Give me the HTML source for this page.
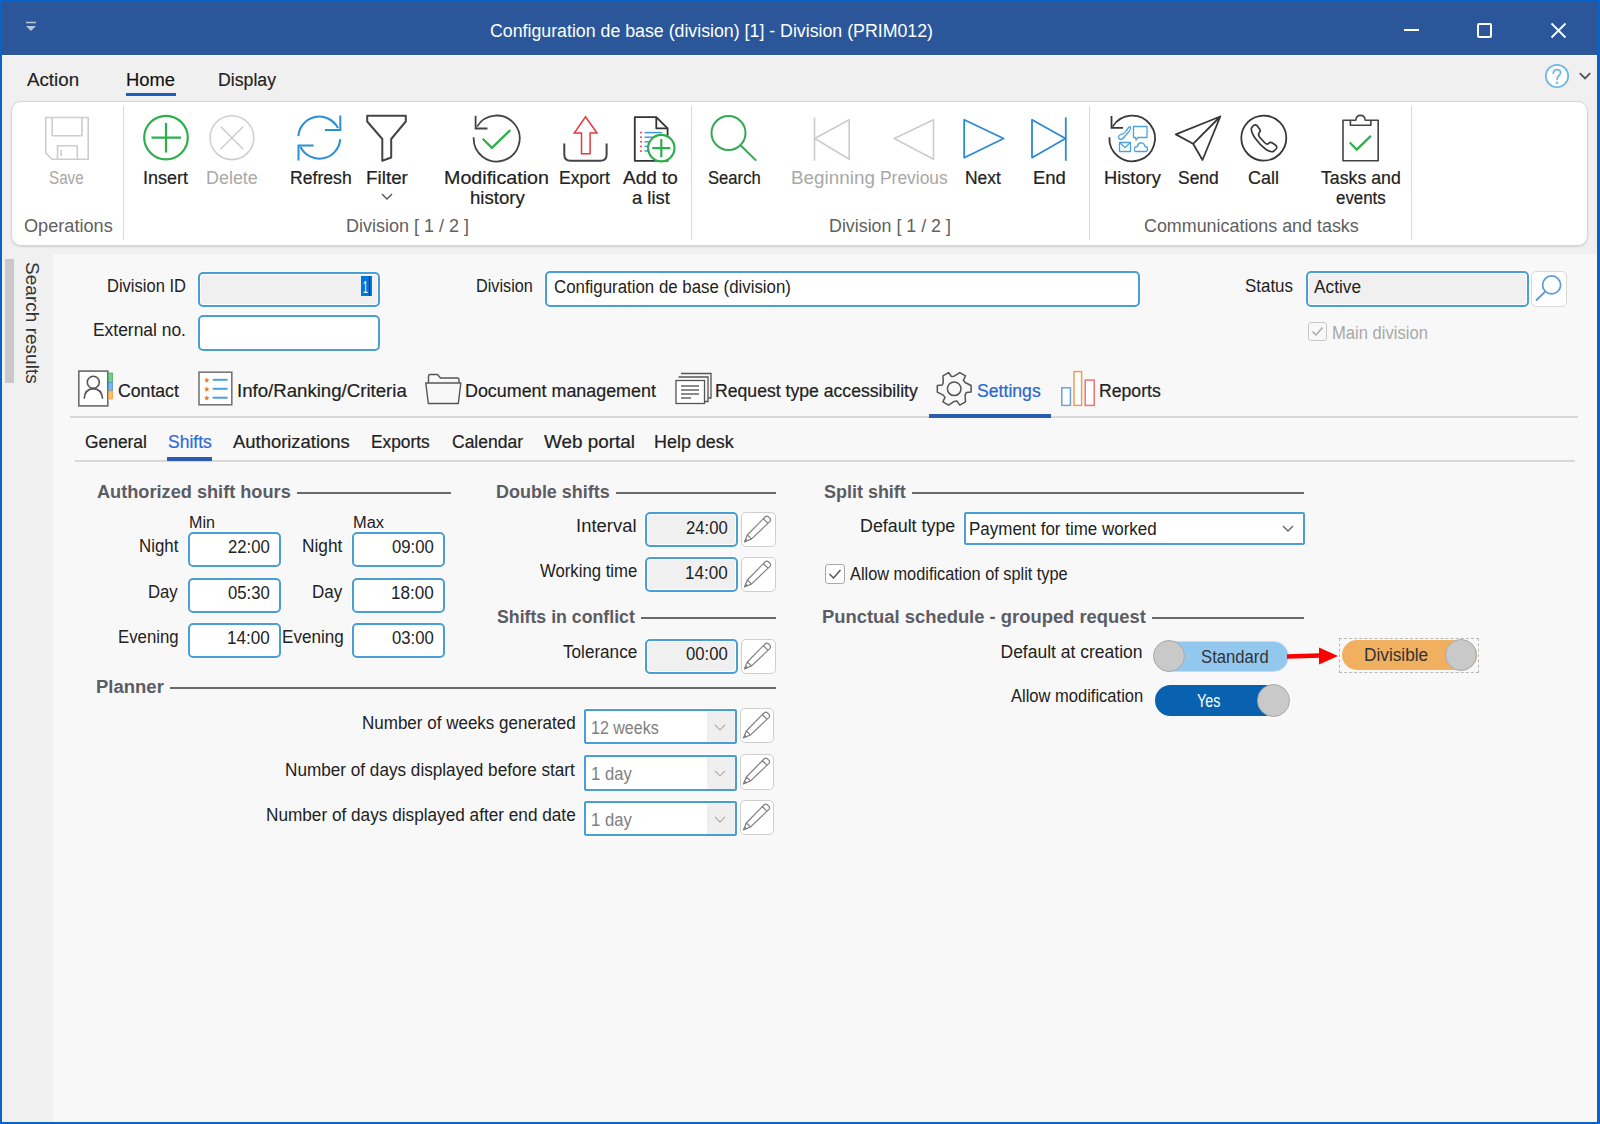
<!DOCTYPE html>
<html><head><meta charset="utf-8"><style>
html,body{margin:0;padding:0;width:1600px;height:1124px;overflow:hidden;background:#f8f8f8;}
body{position:relative;font-family:"Liberation Sans",sans-serif;}
.t{position:absolute;white-space:nowrap;line-height:1;transform-origin:0 0;}
.a{position:absolute;box-sizing:border-box;}
svg{position:absolute;overflow:visible;}
</style></head><body>
<div class=a style="left:0;top:0;width:1600px;height:55px;background:#2b579a"></div>
<div class=a style="left:0;top:55px;width:1600px;height:199px;background:#f0f0f0"></div>
<div class=a style="left:0;top:55px;width:1600px;height:1px;background:#fafafa"></div>
<div class=a style="left:0;top:254px;width:53px;height:870px;background:#f0f0f0"></div>
<div class=a style="left:5px;top:259px;width:9px;height:124px;background:#c9c9c9"></div>
<div class=a style="left:0;top:0;width:2px;height:1124px;background:#0a62c8"></div>
<div class=a style="left:1597px;top:0;width:3px;height:1124px;background:#0a62c8"></div>
<div class=a style="left:0;top:1122px;width:1600px;height:2px;background:#0a62c8"></div>
<div class=a style="left:0;top:0;width:1600px;height:1px;background:#0a62c8"></div>
<div class=a style="left:1404px;top:29px;width:15px;height:2px;background:#fff"></div>
<div class=a style="left:1477px;top:23px;width:15px;height:15px;border:2px solid #fff;border-radius:2px"></div>
<svg style="left:1551px;top:23px" width="15" height="15"><path d="M0.5 0.5L14.5 14.5M14.5 0.5L0.5 14.5" stroke="#fff" stroke-width="1.8"/></svg>
<svg style="left:25px;top:21px" width="12" height="12"><path d="M1 1.5H11" stroke="#b8c4d8" stroke-width="1.5"/><path d="M1 5L6 10L11 5Z" fill="#b8c4d8"/></svg>
<div class=a style="left:126px;top:93px;width:50px;height:3px;background:#1a5fc0"></div>
<svg style="left:1544px;top:62.5px" width="26" height="26"><circle cx="13" cy="13" r="11.2" fill="#fff" stroke="#72b8e6" stroke-width="1.8"/><path d="M9.3 10.3C9.3 7.9 11 6.6 13.1 6.6C15.3 6.6 16.6 8.1 16.6 9.8C16.6 12.2 13.1 13 13.1 16.3" fill="none" stroke="#72b8e6" stroke-width="1.8" stroke-linecap="round"/><circle cx="13" cy="19.8" r="1.2" fill="#72b8e6"/></svg>
<svg style="left:1579px;top:72px" width="12" height="8"><path d="M0.8 1.2L6 6.4L11.2 1.2" fill="none" stroke="#555" stroke-width="1.9"/></svg>
<div class=a style="left:11px;top:101px;width:1577px;height:145px;background:#fff;border:1px solid #d6d6d6;border-radius:10px;box-shadow:0 1px 2px rgba(0,0,0,0.12)"></div>
<div class=a style="left:123px;top:106px;width:1px;height:134px;background:#d9d9d9"></div>
<div class=a style="left:691px;top:106px;width:1px;height:134px;background:#d9d9d9"></div>
<div class=a style="left:1089px;top:106px;width:1px;height:134px;background:#d9d9d9"></div>
<div class=a style="left:1411px;top:106px;width:1px;height:134px;background:#d9d9d9"></div>
<svg style="left:381px;top:193px" width="12" height="8"><path d="M1 1L6 6L11 1" fill="none" stroke="#555" stroke-width="1.4"/></svg>
<svg style="left:40px;top:110px" width="55" height="55" viewBox="40 110 55 55"><g fill="none" stroke="#cdcdcd" stroke-width="1.6" stroke-linejoin="round"><path d="M45.8 117.5H88.2V159.3H52L45.8 153Z"/><path d="M52.2 117.5V135.8H82V117.5"/><path d="M57.5 159.3V145.7H77.3V159.3"/><path d="M61.2 150V156"/></g></svg>
<svg style="left:138px;top:110px" width="56" height="56" viewBox="138 110 56 56"><g fill="none" stroke="#2db04b" stroke-width="2.2"><circle cx="166" cy="137.6" r="21.8"/><path d="M151.5 137.6H181M166 123V152.5"/></g></svg>
<svg style="left:205px;top:110px" width="56" height="56" viewBox="205 110 56 56"><g fill="none" stroke="#cfcfcf" stroke-width="1.6"><circle cx="231.9" cy="137.7" r="21.9"/><path d="M220.5 126.5L243.3 149.2M243.3 126.5L220.5 149.2"/></g></svg>
<svg style="left:292px;top:110px" width="56" height="56" viewBox="292 110 56 56"><g fill="none" stroke="#2b8fd8" stroke-width="2"><path d="M298.35 136.1A21 21 0 0 1 338 128.1"/><path d="M340.3 115.5V130H325"/><path d="M340.25 139.1A21 21 0 0 1 300.4 146.8"/><path d="M298.5 160.5V145.5H313.6"/></g></svg>
<svg style="left:360px;top:110px" width="52" height="56" viewBox="360 110 52 56"><path d="M367.2 115.8H405.8V121.5L391.2 139V157.5L382.3 160.8V139L367.2 121.5Z" fill="none" stroke="#444" stroke-width="2" stroke-linejoin="round"/></svg>
<svg style="left:466px;top:108px" width="60" height="60" viewBox="466 108 60 60"><g fill="none" stroke="#444" stroke-width="1.8"><path d="M477 126.6A23 23 0 1 1 473.7 137.3"/><path d="M475.6 115.8V128.5H487.5"/></g><path d="M482.7 138.8L491.9 147.8L510.3 130.2" fill="none" stroke="#2db04b" stroke-width="2.3"/></svg>
<svg style="left:560px;top:110px" width="52" height="56" viewBox="560 110 52 56"><path d="M585.5 116.8L597 133H590.1V153.8H581.5V133H574.3Z" fill="none" stroke="#e8383d" stroke-width="1.5" stroke-linejoin="miter"/><path d="M564.3 143.5V154.5Q564.3 160.8 570.6 160.8H600.3Q606.6 160.8 606.6 154.5V143.5" fill="none" stroke="#444" stroke-width="2"/></svg>
<svg style="left:628px;top:110px" width="50" height="56" viewBox="628 110 50 56"><g fill="none" stroke="#333" stroke-width="1.8" stroke-linejoin="round"><path d="M634.8 117.2H656.3L667.6 128.3V160.8H634.8Z"/><path d="M656.3 117.5V128.3H667.4"/></g><circle cx="641" cy="132.6" r="1" fill="#e8443a"/><path d="M644.5 132.6H662" stroke="#3a93dc" stroke-width="1.4"/><circle cx="641" cy="137.2" r="1" fill="#e8443a"/><path d="M644.5 137.2H662" stroke="#3a93dc" stroke-width="1.4"/><circle cx="641" cy="141.8" r="1" fill="#e8443a"/><path d="M644.5 141.8H662" stroke="#3a93dc" stroke-width="1.4"/><circle cx="641" cy="146.4" r="1" fill="#e8443a"/><path d="M644.5 146.4H662" stroke="#3a93dc" stroke-width="1.4"/><circle cx="641" cy="151" r="1" fill="#e8443a"/><path d="M644.5 151H662" stroke="#3a93dc" stroke-width="1.4"/><circle cx="661.3" cy="148.1" r="13.2" fill="#fff" stroke="#2db04b" stroke-width="2.2"/><path d="M652.3 148.1H670.3M661.3 139.1V157.1" stroke="#2db04b" stroke-width="2.2"/></svg>
<svg style="left:705px;top:110px" width="56" height="56" viewBox="705 110 56 56"><g fill="none" stroke="#33a956" stroke-width="2"><circle cx="728.5" cy="133" r="17"/><path d="M740.8 145.5L756.2 160.6"/></g></svg>
<svg style="left:805px;top:110px" width="50" height="56" viewBox="805 110 50 56"><g fill="none" stroke="#cccccc" stroke-width="1.6" stroke-linejoin="round"><path d="M814.5 117.4V160.8"/><path d="M849.2 119.8V159.2L814.8 138.5Z"/></g></svg>
<svg style="left:888px;top:110px" width="50" height="56" viewBox="888 110 50 56"><path d="M933.5 119.8V159.2L894.3 138.5Z" fill="none" stroke="#cccccc" stroke-width="1.6" stroke-linejoin="round"/></svg>
<svg style="left:958px;top:110px" width="50" height="56" viewBox="958 110 50 56"><path d="M964.2 119.8V157.7L1003.6 138.5Z" fill="none" stroke="#2b8ad8" stroke-width="1.8" stroke-linejoin="round"/></svg>
<svg style="left:1026px;top:110px" width="48" height="56" viewBox="1026 110 48 56"><g fill="none" stroke="#2b8ad8" stroke-width="1.8" stroke-linejoin="round"><path d="M1032 119.8V157.7L1065.5 138.5Z"/><path d="M1065.8 117.4V160.8"/></g></svg>
<svg style="left:1104px;top:110px" width="58" height="56" viewBox="1104 110 58 56"><g fill="none" stroke="#383838" stroke-width="1.8"><path d="M1112.7 126.6A22.8 22.8 0 1 1 1109.4 137.3"/><path d="M1111.5 116V127.8H1123"/></g><g fill="none" stroke="#4ba2e0" stroke-width="1.3" stroke-linejoin="round"><path d="M1133.5 126.5H1147V137.5H1138L1136 140L1135.5 137.5H1133.5Z"/><rect x="1119.5" y="142.5" width="11" height="9"/><path d="M1119.5 142.5L1125 147.5L1130.5 142.5"/><path d="M1135 151.5H1146Q1147.5 151.5 1147.5 149Q1147.5 146.5 1145 146.5Q1144 142.5 1140.5 143Q1137.5 143.5 1137.5 146.5Q1134 146.5 1134.5 149.5Q1134.8 151.5 1135 151.5Z"/><path d="M1119 138.5Q1117.5 135.5 1121 134.5Q1124 134 1126 131L1129 127Q1130 126 1130.5 127.5Q1131 129 1129 131.5L1125 136Q1122.5 139.5 1120.5 139.5Q1119.3 139.5 1119 138.5Z"/></g></svg>
<svg style="left:1170px;top:110px" width="56" height="56" viewBox="1170 110 56 56"><path d="M1220.3 116.5L1175.8 134.4L1193.1 143.8Z M1220.3 116.5L1193.1 143.8L1202.5 160Z" fill="none" stroke="#383838" stroke-width="1.8" stroke-linejoin="round"/></svg>
<svg style="left:1236px;top:110px" width="56" height="56" viewBox="1236 110 56 56"><circle cx="1263.8" cy="138.1" r="22.5" fill="none" stroke="#383838" stroke-width="1.8"/><path d="M1253 126Q1255 124 1257 125.5L1259.5 129Q1261 131 1259 133Q1258 134.5 1259.5 137L1264.5 142.5Q1267 145 1268.5 143.5Q1270.5 141.5 1272.5 143L1276 145.5Q1277.5 147 1276 149L1274 151Q1271.5 153 1266 149.5Q1260 145 1255 138Q1250.5 131 1251.5 128Z" fill="none" stroke="#383838" stroke-width="1.7" stroke-linejoin="round"/></svg>
<svg style="left:1336px;top:110px" width="50" height="56" viewBox="1336 110 50 56"><g fill="none" stroke="#444" stroke-width="1.6" stroke-linejoin="round"><path d="M1343 120.3H1355.8Q1356.2 115.4 1360.5 115.4Q1364.8 115.4 1365.2 120.3H1378.2V160.8H1343Z"/><path d="M1350.4 120.3V125.3H1370.9V120.3"/></g><path d="M1349.8 142.6L1356.7 149.6L1370.9 135.9" fill="none" stroke="#2db04b" stroke-width="2.2"/></svg>
<svg style="left:74px;top:366px" width="44" height="46" viewBox="74 366 44 46"><rect x="78.8" y="371.1" width="29" height="34.8" fill="#fff" stroke="#6a6a6a" stroke-width="1.6"/><circle cx="93.3" cy="382.3" r="6" fill="none" stroke="#555" stroke-width="1.6"/><path d="M84.2 398.6Q85 388.8 93.3 388.6Q101.6 388.8 102.6 398.6" fill="none" stroke="#555" stroke-width="1.6"/><rect x="108.5" y="373" width="4" height="9.5" fill="#7fc88f" stroke="#4cae60" stroke-width="0.8"/><rect x="108.5" y="382.5" width="4" height="8.5" fill="#7fb5e4" stroke="#4a94d8" stroke-width="0.8"/><rect x="108.5" y="391" width="4" height="8" fill="#f3c078" stroke="#eaa040" stroke-width="0.8"/></svg>
<svg style="left:194px;top:366px" width="42" height="46" viewBox="194 366 42 46"><rect x="199" y="372.2" width="32.8" height="32.6" fill="#fff" stroke="#777" stroke-width="1.6"/><path d="M206.8 377.2L207.6 379.2L209.6 379.40000000000003L208 380.7L208.6 382.7L206.8 381.5L205 382.7L205.6 380.7L204 379.40000000000003L206 379.2Z" fill="#ee7a2a"/><path d="M212.7 379.8H227.6" stroke="#4aa0dc" stroke-width="2"/><path d="M206.8 386.2L207.6 388.2L209.6 388.40000000000003L208 389.7L208.6 391.7L206.8 390.5L205 391.7L205.6 389.7L204 388.40000000000003L206 388.2Z" fill="#ee7a2a"/><path d="M212.7 388.8H227.6" stroke="#4aa0dc" stroke-width="2"/><path d="M206.8 395.09999999999997L207.6 397.09999999999997L209.6 397.3L208 398.59999999999997L208.6 400.59999999999997L206.8 399.4L205 400.59999999999997L205.6 398.59999999999997L204 397.3L206 397.09999999999997Z" fill="#ee7a2a"/><path d="M212.7 397.7H227.6" stroke="#4aa0dc" stroke-width="2"/></svg>
<svg style="left:420px;top:366px" width="46" height="46" viewBox="420 366 46 46"><g fill="none" stroke="#555" stroke-width="1.4" stroke-linejoin="round"><path d="M428.5 382.5V376Q428.5 374.5 430 374.5H437.5L440.5 378H457.5Q459 378 459 379.5V382.5"/><path d="M425.8 383H460.8L458.3 403.5H428.3Z"/></g></svg>
<svg style="left:670px;top:366px" width="46" height="46" viewBox="670 366 46 46"><g fill="none" stroke="#555" stroke-width="1.3"><path d="M681 373.5H711V398H708"/><path d="M678.5 377H708V401.5H705"/><rect x="676" y="380.5" width="28.5" height="23" fill="#fff"/></g><path d="M681 386H699M681 390H699M681 394H699M681 398H691" stroke="#666" stroke-width="1.3"/></svg>
<svg style="left:930px;top:366px" width="48" height="46" viewBox="930 366 48 46"><path d="M965.11 382.50 L971.08 385.52 L971.08 392.08 L966.25 392.48 L965.11 395.10 L965.48 401.78 L959.80 405.06 L957.03 401.08 L954.20 401.40 L948.60 405.06 L942.92 401.78 L944.98 397.39 L943.29 395.10 L937.32 392.08 L937.32 385.52 L942.15 385.12 L943.29 382.50 L942.92 375.82 L948.60 372.54 L951.37 376.52 L954.20 376.20 L959.80 372.54 L965.48 375.82 L963.42 380.21Z" fill="none" stroke="#555" stroke-width="1.5" stroke-linejoin="round"/><circle cx="954.2" cy="388.8" r="6.8" fill="none" stroke="#555" stroke-width="1.5"/></svg>
<svg style="left:1056px;top:366px" width="44" height="46" viewBox="1056 366 44 46"><rect x="1061.8" y="387.8" width="8.6" height="17.6" fill="#fff" stroke="#6aa2da" stroke-width="1.5"/><rect x="1074" y="371.6" width="7.6" height="33.8" fill="#fff" stroke="#ef9d55" stroke-width="1.5"/><rect x="1085.2" y="380.1" width="9" height="25.3" fill="#fff" stroke="#ea7474" stroke-width="1.5"/></svg>
<div class=a style="left:198px;top:272px;width:182px;height:35px;background:#f0f0f0;border:2px solid #4a9ed6;border-radius:5px;box-shadow:0 0 0 1px #fff,inset 0 0 0 1px #fff"></div>
<div class=a style="left:361px;top:276px;width:11px;height:20px;background:#0078d7"></div>
<div class=a style="left:369px;top:276px;width:1px;height:20px;background:#222"></div>
<div class=a style="left:198px;top:315px;width:182px;height:36px;background:#fff;border:2px solid #4a9ed6;border-radius:5px;box-shadow:0 0 0 1px #fff,inset 0 0 0 1px #fff"></div>
<div class=a style="left:545px;top:271px;width:595px;height:36px;background:#fff;border:2px solid #4a9ed6;border-radius:5px;box-shadow:0 0 0 1px #fff,inset 0 0 0 1px #fff"></div>
<div class=a style="left:1306px;top:271px;width:223px;height:36px;background:#f0f0f0;border:2px solid #4a9ed6;border-radius:5px;box-shadow:0 0 0 1px #fff,inset 0 0 0 1px #fff"></div>
<div class=a style="left:1531px;top:271px;width:36px;height:36px;background:#fff;border:1px solid #d9d9d9;border-radius:5px"></div>
<svg style="left:1535px;top:274px" width="30" height="30"><circle cx="16.6" cy="10.9" r="9" fill="none" stroke="#5a9ad8" stroke-width="1.7"/><path d="M10.2 17.6L1.5 26" stroke="#5a9ad8" stroke-width="1.9" stroke-linecap="round"/></svg>
<div class=a style="left:1308px;top:322px;width:19px;height:19px;border:1px solid #c8c8c8;border-radius:3px;background:#f8f8f8"></div>
<svg style="left:1308px;top:322px" width="19" height="19"><path d="M4.5 9.5L8 13L14.5 5.5" fill="none" stroke="#aaa" stroke-width="1.5"/></svg>
<div class=a style="left:70px;top:416px;width:1508px;height:2px;background:#d8d8d8"></div>
<div class=a style="left:929px;top:414px;width:122px;height:4px;background:#2b5cb0"></div>
<div class=a style="left:75px;top:460px;width:1500px;height:2px;background:#d8d8d8"></div>
<div class=a style="left:167px;top:457px;width:45px;height:4px;background:#2b5cb0"></div>
<div class=a style="left:297px;top:492px;width:154px;height:2px;background:#6a6a6a"></div>
<div class=a style="left:616px;top:492px;width:160px;height:2px;background:#6a6a6a"></div>
<div class=a style="left:641px;top:617px;width:135px;height:2px;background:#6a6a6a"></div>
<div class=a style="left:170px;top:687px;width:606px;height:2px;background:#6a6a6a"></div>
<div class=a style="left:912px;top:492px;width:392px;height:2px;background:#6a6a6a"></div>
<div class=a style="left:1152px;top:617px;width:152px;height:2px;background:#6a6a6a"></div>
<div class=a style="left:188px;top:532px;width:93px;height:35px;background:#fff;border:2px solid #4a9ed6;border-radius:5px;box-shadow:0 0 0 1px #fff,inset 0 0 0 1px #fff"></div>
<div class=a style="left:352px;top:532px;width:93px;height:35px;background:#fff;border:2px solid #4a9ed6;border-radius:5px;box-shadow:0 0 0 1px #fff,inset 0 0 0 1px #fff"></div>
<div class=a style="left:188px;top:578px;width:93px;height:35px;background:#fff;border:2px solid #4a9ed6;border-radius:5px;box-shadow:0 0 0 1px #fff,inset 0 0 0 1px #fff"></div>
<div class=a style="left:352px;top:578px;width:93px;height:35px;background:#fff;border:2px solid #4a9ed6;border-radius:5px;box-shadow:0 0 0 1px #fff,inset 0 0 0 1px #fff"></div>
<div class=a style="left:188px;top:623px;width:93px;height:35px;background:#fff;border:2px solid #4a9ed6;border-radius:5px;box-shadow:0 0 0 1px #fff,inset 0 0 0 1px #fff"></div>
<div class=a style="left:352px;top:623px;width:93px;height:35px;background:#fff;border:2px solid #4a9ed6;border-radius:5px;box-shadow:0 0 0 1px #fff,inset 0 0 0 1px #fff"></div>
<div class=a style="left:645px;top:512px;width:93px;height:35px;background:#f0f0f0;border:2px solid #4a9ed6;border-radius:5px;box-shadow:0 0 0 1px #fff,inset 0 0 0 1px #fff"></div>
<div class=a style="left:741px;top:512px;width:35px;height:35px;background:#fff;border:1px solid #cfcfcf;border-radius:5px"></div>
<svg style="left:741px;top:512px" width="35" height="35"><path d="M3.4 30L6.3 23L24 5Q25.8 3.3 27.6 5L28.8 6.2Q30.4 8 28.7 9.6L10.6 26.9Z M6.3 23L10.6 26.9 M22.4 6.8L26.9 11.1" fill="none" stroke="#808080" stroke-width="1.2" stroke-linejoin="round"/><path d="M3.4 30L4.6 26.2L7.2 28.7Z" fill="#808080"/></svg>
<div class=a style="left:645px;top:557px;width:93px;height:35px;background:#f0f0f0;border:2px solid #4a9ed6;border-radius:5px;box-shadow:0 0 0 1px #fff,inset 0 0 0 1px #fff"></div>
<div class=a style="left:741px;top:557px;width:35px;height:35px;background:#fff;border:1px solid #cfcfcf;border-radius:5px"></div>
<svg style="left:741px;top:557px" width="35" height="35"><path d="M3.4 30L6.3 23L24 5Q25.8 3.3 27.6 5L28.8 6.2Q30.4 8 28.7 9.6L10.6 26.9Z M6.3 23L10.6 26.9 M22.4 6.8L26.9 11.1" fill="none" stroke="#808080" stroke-width="1.2" stroke-linejoin="round"/><path d="M3.4 30L4.6 26.2L7.2 28.7Z" fill="#808080"/></svg>
<div class=a style="left:645px;top:639px;width:93px;height:35px;background:#f0f0f0;border:2px solid #4a9ed6;border-radius:5px;box-shadow:0 0 0 1px #fff,inset 0 0 0 1px #fff"></div>
<div class=a style="left:741px;top:639px;width:35px;height:35px;background:#fff;border:1px solid #cfcfcf;border-radius:5px"></div>
<svg style="left:741px;top:639px" width="35" height="35"><path d="M3.4 30L6.3 23L24 5Q25.8 3.3 27.6 5L28.8 6.2Q30.4 8 28.7 9.6L10.6 26.9Z M6.3 23L10.6 26.9 M22.4 6.8L26.9 11.1" fill="none" stroke="#808080" stroke-width="1.2" stroke-linejoin="round"/><path d="M3.4 30L4.6 26.2L7.2 28.7Z" fill="#808080"/></svg>
<div class=a style="left:584px;top:709px;width:153px;height:35px;background:#fff;border:2px solid #4a9ed6;border-radius:2px;box-shadow:0 0 0 1px #fff,inset 0 0 0 1px #fff"></div>
<div class=a style="left:707px;top:711px;width:28px;height:31px;background:#efefef"></div>
<svg style="left:714px;top:723.5px" width="12" height="7"><path d="M1 1L6 6L11 1" fill="none" stroke="#b0b0b0" stroke-width="1.2"/></svg>
<div class=a style="left:740px;top:708px;width:34px;height:35px;background:#fff;border:1px solid #cfcfcf;border-radius:5px"></div>
<svg style="left:740px;top:708px" width="35" height="35"><path d="M3.4 30L6.3 23L24 5Q25.8 3.3 27.6 5L28.8 6.2Q30.4 8 28.7 9.6L10.6 26.9Z M6.3 23L10.6 26.9 M22.4 6.8L26.9 11.1" fill="none" stroke="#808080" stroke-width="1.2" stroke-linejoin="round"/><path d="M3.4 30L4.6 26.2L7.2 28.7Z" fill="#808080"/></svg>
<div class=a style="left:584px;top:755px;width:153px;height:36px;background:#fff;border:2px solid #4a9ed6;border-radius:2px;box-shadow:0 0 0 1px #fff,inset 0 0 0 1px #fff"></div>
<div class=a style="left:707px;top:757px;width:28px;height:32px;background:#efefef"></div>
<svg style="left:714px;top:770.0px" width="12" height="7"><path d="M1 1L6 6L11 1" fill="none" stroke="#b0b0b0" stroke-width="1.2"/></svg>
<div class=a style="left:740px;top:754px;width:34px;height:36px;background:#fff;border:1px solid #cfcfcf;border-radius:5px"></div>
<svg style="left:740px;top:754px" width="35" height="35"><path d="M3.4 30L6.3 23L24 5Q25.8 3.3 27.6 5L28.8 6.2Q30.4 8 28.7 9.6L10.6 26.9Z M6.3 23L10.6 26.9 M22.4 6.8L26.9 11.1" fill="none" stroke="#808080" stroke-width="1.2" stroke-linejoin="round"/><path d="M3.4 30L4.6 26.2L7.2 28.7Z" fill="#808080"/></svg>
<div class=a style="left:584px;top:801px;width:153px;height:35px;background:#fff;border:2px solid #4a9ed6;border-radius:2px;box-shadow:0 0 0 1px #fff,inset 0 0 0 1px #fff"></div>
<div class=a style="left:707px;top:803px;width:28px;height:31px;background:#efefef"></div>
<svg style="left:714px;top:815.5px" width="12" height="7"><path d="M1 1L6 6L11 1" fill="none" stroke="#b0b0b0" stroke-width="1.2"/></svg>
<div class=a style="left:740px;top:800px;width:34px;height:35px;background:#fff;border:1px solid #cfcfcf;border-radius:5px"></div>
<svg style="left:740px;top:800px" width="35" height="35"><path d="M3.4 30L6.3 23L24 5Q25.8 3.3 27.6 5L28.8 6.2Q30.4 8 28.7 9.6L10.6 26.9Z M6.3 23L10.6 26.9 M22.4 6.8L26.9 11.1" fill="none" stroke="#808080" stroke-width="1.2" stroke-linejoin="round"/><path d="M3.4 30L4.6 26.2L7.2 28.7Z" fill="#808080"/></svg>
<div class=a style="left:964px;top:512px;width:341px;height:33px;background:#fff;border:2px solid #4a9ed6;border-radius:2px;box-shadow:0 0 0 1px #fff,inset 0 0 0 1px #fff"></div>
<svg style="left:1282px;top:525px" width="12" height="8"><path d="M1 1L6 6L11 1" fill="none" stroke="#666" stroke-width="1.4"/></svg>
<div class=a style="left:825px;top:564px;width:20px;height:20px;border:1px solid #a8a8a8;border-radius:3px;background:#fff"></div>
<svg style="left:825px;top:564px" width="20" height="20"><path d="M4.5 10L8.5 14L15.5 6" fill="none" stroke="#555" stroke-width="1.5"/></svg>
<div class=a style="left:1154px;top:641px;width:135px;height:31px;background:#93c8ee;border-radius:16px;border:1px solid #c0dff5"></div>
<div class=a style="left:1153px;top:640px;width:32px;height:32px;background:#c9c9c9;border-radius:50%;border:1.5px solid #a9a9a9"></div>
<div class=a style="left:1339px;top:638px;width:140px;height:35px;border:1px dashed #b8b8b8"></div>
<div class=a style="left:1342px;top:640px;width:135px;height:30px;background:#f0b060;border-radius:16px"></div>
<div class=a style="left:1445px;top:639px;width:32px;height:32px;background:#c9c9c9;border-radius:50%;border:1.5px solid #a9a9a9"></div>
<svg style="left:1286px;top:645px" width="54" height="22"><path d="M1 11.5L34 10.5" stroke="#f00" stroke-width="4.5"/><path d="M33 2.5L52 11L33 19.5Z" fill="#f00"/></svg>
<div class=a style="left:1155px;top:685px;width:134px;height:31px;background:#0962b0;border-radius:16px"></div>
<div class=a style="left:1257px;top:684px;width:33px;height:33px;background:#c9c9c9;border-radius:50%;border:1.5px solid #a9a9a9"></div>
<div class=t style="left:41px;top:262px;font-size:18px;color:#333;transform:rotate(90deg) scaleX(1.058);transform-origin:0 0">Search results</div>
<div class=t style="left:490.00px;top:21.56px;font-size:18px;color:#fff;transform:scaleX(0.9862);">Configuration de base (division) [1] - Division (PRIM012)</div>
<div class=t style="left:27.00px;top:70.76px;font-size:18px;color:#222;transform:scaleX(1.0405);-webkit-text-stroke:0.15px currentColor;">Action</div>
<div class=t style="left:125.98px;top:70.76px;font-size:18px;color:#111;transform:scaleX(1.0212);-webkit-text-stroke:0.15px currentColor;">Home</div>
<div class=t style="left:218.02px;top:70.76px;font-size:18px;color:#222;transform:scaleX(0.9824);-webkit-text-stroke:0.15px currentColor;">Display</div>
<div class=t style="left:49.00px;top:169.98px;font-size:17.5px;color:#a8a8a8;transform:scaleX(0.8683);">Save</div>
<div class=t style="left:142.97px;top:169.98px;font-size:17.5px;color:#222;transform:scaleX(1.0255);-webkit-text-stroke:0.2px currentColor;">Insert</div>
<div class=t style="left:205.98px;top:169.98px;font-size:17.5px;color:#a8a8a8;transform:scaleX(1.0235);">Delete</div>
<div class=t style="left:289.99px;top:169.98px;font-size:17.5px;color:#222;transform:scaleX(1.0077);-webkit-text-stroke:0.2px currentColor;">Refresh</div>
<div class=t style="left:365.92px;top:169.98px;font-size:17.5px;color:#222;transform:scaleX(1.0772);-webkit-text-stroke:0.2px currentColor;">Filter</div>
<div class=t style="left:443.88px;top:169.98px;font-size:17.5px;color:#222;transform:scaleX(1.1239);-webkit-text-stroke:0.2px currentColor;">Modification</div>
<div class=t style="left:469.94px;top:189.98px;font-size:17.5px;color:#222;transform:scaleX(1.0631);-webkit-text-stroke:0.2px currentColor;">history</div>
<div class=t style="left:558.99px;top:169.98px;font-size:17.5px;color:#222;transform:scaleX(1.0057);-webkit-text-stroke:0.2px currentColor;">Export</div>
<div class=t style="left:623.00px;top:169.98px;font-size:17.5px;color:#222;transform:scaleX(1.0830);-webkit-text-stroke:0.2px currentColor;">Add to</div>
<div class=t style="left:632.00px;top:189.98px;font-size:17.5px;color:#222;transform:scaleX(1.0520);-webkit-text-stroke:0.2px currentColor;">a list</div>
<div class=t style="left:708.00px;top:169.98px;font-size:17.5px;color:#222;transform:scaleX(0.9504);-webkit-text-stroke:0.2px currentColor;">Search</div>
<div class=t style="left:790.92px;top:169.98px;font-size:17.5px;color:#a8a8a8;transform:scaleX(1.0774);">Beginning</div>
<div class=t style="left:880.00px;top:169.98px;font-size:17.5px;color:#a8a8a8;transform:scaleX(0.9950);">Previous</div>
<div class=t style="left:965.00px;top:169.98px;font-size:17.5px;color:#222;transform:scaleX(0.9966);-webkit-text-stroke:0.2px currentColor;">Next</div>
<div class=t style="left:1032.95px;top:169.98px;font-size:17.5px;color:#222;transform:scaleX(1.0542);-webkit-text-stroke:0.2px currentColor;">End</div>
<div class=t style="left:1103.96px;top:169.98px;font-size:17.5px;color:#222;transform:scaleX(1.0429);-webkit-text-stroke:0.2px currentColor;">History</div>
<div class=t style="left:1178.00px;top:169.98px;font-size:17.5px;color:#222;transform:scaleX(0.9966);-webkit-text-stroke:0.2px currentColor;">Send</div>
<div class=t style="left:1248.00px;top:169.98px;font-size:17.5px;color:#222;transform:scaleX(1.0253);-webkit-text-stroke:0.2px currentColor;">Call</div>
<div class=t style="left:1321.00px;top:169.98px;font-size:17.5px;color:#222;transform:scaleX(1.0120);-webkit-text-stroke:0.2px currentColor;">Tasks and</div>
<div class=t style="left:1336.00px;top:189.98px;font-size:17.5px;color:#222;transform:scaleX(0.9651);-webkit-text-stroke:0.2px currentColor;">events</div>
<div class=t style="left:24.00px;top:217.98px;font-size:17.5px;color:#606060;transform:scaleX(1.0367);">Operations</div>
<div class=t style="left:345.97px;top:217.98px;font-size:17.5px;color:#606060;transform:scaleX(1.0275);">Division [ 1 / 2 ]</div>
<div class=t style="left:828.98px;top:217.98px;font-size:17.5px;color:#606060;transform:scaleX(1.0190);">Division [ 1 / 2 ]</div>
<div class=t style="left:1144.00px;top:217.98px;font-size:17.5px;color:#606060;transform:scaleX(1.0221);">Communications and tasks</div>
<div class=t style="left:107.08px;top:276.76px;font-size:18px;color:#222;transform:scaleX(0.9174);">Division ID</div>
<div class=t style="left:363.00px;top:279.41px;font-size:17px;color:#fff;transform:scaleX(0.5000);">1</div>
<div class=t style="left:93.03px;top:320.76px;font-size:18px;color:#222;transform:scaleX(0.9675);">External no.</div>
<div class=t style="left:476.10px;top:276.76px;font-size:18px;color:#222;transform:scaleX(0.9015);">Division</div>
<div class=t style="left:554.00px;top:278.16px;font-size:18px;color:#222;transform:scaleX(0.9360);">Configuration de base (division)</div>
<div class=t style="left:1245.00px;top:276.76px;font-size:18px;color:#222;transform:scaleX(0.9406);">Status</div>
<div class=t style="left:1314.00px;top:278.16px;font-size:18px;color:#222;transform:scaleX(0.9591);">Active</div>
<div class=t style="left:1332.08px;top:323.56px;font-size:18px;color:#a8a8a8;transform:scaleX(0.9213);">Main division</div>
<div class=t style="left:118.00px;top:382.98px;font-size:17.5px;color:#222;transform:scaleX(1.0091);-webkit-text-stroke:0.2px currentColor;">Contact</div>
<div class=t style="left:236.94px;top:382.98px;font-size:17.5px;color:#222;transform:scaleX(1.0643);-webkit-text-stroke:0.2px currentColor;">Info/Ranking/Criteria</div>
<div class=t style="left:464.98px;top:382.98px;font-size:17.5px;color:#222;transform:scaleX(1.0220);-webkit-text-stroke:0.2px currentColor;">Document management</div>
<div class=t style="left:714.99px;top:382.98px;font-size:17.5px;color:#222;transform:scaleX(1.0070);-webkit-text-stroke:0.2px currentColor;">Request type accessibility</div>
<div class=t style="left:977.00px;top:382.98px;font-size:17.5px;color:#2a66d0;transform:scaleX(1.0082);-webkit-text-stroke:0.2px currentColor;">Settings</div>
<div class=t style="left:1098.99px;top:382.98px;font-size:17.5px;color:#222;transform:scaleX(1.0078);-webkit-text-stroke:0.2px currentColor;">Reports</div>
<div class=t style="left:85.00px;top:433.98px;font-size:17.5px;color:#222;transform:scaleX(0.9940);-webkit-text-stroke:0.2px currentColor;">General</div>
<div class=t style="left:168.00px;top:433.98px;font-size:17.5px;color:#2f6ad4;-webkit-text-stroke:0.2px currentColor;">Shifts</div>
<div class=t style="left:233.00px;top:433.98px;font-size:17.5px;color:#222;transform:scaleX(1.0527);-webkit-text-stroke:0.2px currentColor;">Authorizations</div>
<div class=t style="left:371.01px;top:433.98px;font-size:17.5px;color:#222;transform:scaleX(0.9901);-webkit-text-stroke:0.2px currentColor;">Exports</div>
<div class=t style="left:452.00px;top:433.98px;font-size:17.5px;color:#222;-webkit-text-stroke:0.2px currentColor;">Calendar</div>
<div class=t style="left:544.00px;top:433.98px;font-size:17.5px;color:#222;transform:scaleX(1.0789);-webkit-text-stroke:0.2px currentColor;">Web portal</div>
<div class=t style="left:653.97px;top:433.98px;font-size:17.5px;color:#222;transform:scaleX(1.0251);-webkit-text-stroke:0.2px currentColor;">Help desk</div>
<div class=t style="left:97.00px;top:483.98px;font-size:17.5px;color:#5c5c64;font-weight:bold;transform:scaleX(1.0379);">Authorized shift hours</div>
<div class=t style="left:495.97px;top:483.98px;font-size:17.5px;color:#5c5c64;font-weight:bold;transform:scaleX(1.0263);">Double shifts</div>
<div class=t style="left:497.00px;top:608.98px;font-size:17.5px;color:#5c5c64;font-weight:bold;transform:scaleX(1.0126);">Shifts in conflict</div>
<div class=t style="left:95.94px;top:678.98px;font-size:17.5px;color:#5c5c64;font-weight:bold;transform:scaleX(1.0571);">Planner</div>
<div class=t style="left:824.00px;top:483.98px;font-size:17.5px;color:#5c5c64;font-weight:bold;transform:scaleX(1.0264);">Split shift</div>
<div class=t style="left:821.95px;top:608.98px;font-size:17.5px;color:#5c5c64;font-weight:bold;transform:scaleX(1.0507);">Punctual schedule - grouped request</div>
<div class=t style="left:189.00px;top:515.25px;font-size:16px;color:#222;transform:scaleX(1.0049);">Min</div>
<div class=t style="left:352.97px;top:515.25px;font-size:16px;color:#222;transform:scaleX(1.0265);">Max</div>
<div class=t style="left:138.54px;top:537.98px;font-size:17.5px;color:#222;transform:scaleX(0.9627);">Night</div>
<div class=t style="left:228.00px;top:539.48px;font-size:17.5px;color:#222;transform:scaleX(0.9532);">22:00</div>
<div class=t style="left:302.01px;top:537.98px;font-size:17.5px;color:#222;transform:scaleX(0.9877);">Night</div>
<div class=t style="left:392.00px;top:539.48px;font-size:17.5px;color:#222;transform:scaleX(0.9532);">09:00</div>
<div class=t style="left:148.05px;top:583.98px;font-size:17.5px;color:#222;transform:scaleX(0.9549);">Day</div>
<div class=t style="left:228.00px;top:585.48px;font-size:17.5px;color:#222;transform:scaleX(0.9532);">05:30</div>
<div class=t style="left:312.03px;top:583.98px;font-size:17.5px;color:#222;transform:scaleX(0.9713);">Day</div>
<div class=t style="left:391.02px;top:585.48px;font-size:17.5px;color:#222;transform:scaleX(0.9754);">18:00</div>
<div class=t style="left:118.04px;top:628.98px;font-size:17.5px;color:#222;transform:scaleX(0.9592);">Evening</div>
<div class=t style="left:227.02px;top:630.48px;font-size:17.5px;color:#222;transform:scaleX(0.9754);">14:00</div>
<div class=t style="left:281.52px;top:628.98px;font-size:17.5px;color:#222;transform:scaleX(0.9755);">Evening</div>
<div class=t style="left:392.00px;top:630.48px;font-size:17.5px;color:#222;transform:scaleX(0.9532);">03:00</div>
<div class=t style="left:576.45px;top:518.48px;font-size:17.5px;color:#222;transform:scaleX(1.0541);">Interval</div>
<div class=t style="left:686.00px;top:519.98px;font-size:17.5px;color:#222;transform:scaleX(0.9532);">24:00</div>
<div class=t style="left:539.50px;top:563.48px;font-size:17.5px;color:#222;transform:scaleX(0.9549);">Working time</div>
<div class=t style="left:685.02px;top:564.98px;font-size:17.5px;color:#222;transform:scaleX(0.9754);">14:00</div>
<div class=t style="left:562.50px;top:644.48px;font-size:17.5px;color:#222;transform:scaleX(0.9781);">Tolerance</div>
<div class=t style="left:686.00px;top:645.98px;font-size:17.5px;color:#222;transform:scaleX(0.9532);">00:00</div>
<div class=t style="left:362.03px;top:715.48px;font-size:17.5px;color:#222;transform:scaleX(0.9720);">Number of weeks generated</div>
<div class=t style="left:591.08px;top:719.98px;font-size:17.5px;color:#808080;transform:scaleX(0.9155);">12 weeks</div>
<div class=t style="left:285.02px;top:761.98px;font-size:17.5px;color:#222;transform:scaleX(0.9802);">Number of days displayed before start</div>
<div class=t style="left:591.05px;top:766.48px;font-size:17.5px;color:#808080;transform:scaleX(0.9510);">1 day</div>
<div class=t style="left:266.02px;top:807.48px;font-size:17.5px;color:#222;transform:scaleX(0.9826);">Number of days displayed after end date</div>
<div class=t style="left:591.05px;top:811.98px;font-size:17.5px;color:#808080;transform:scaleX(0.9510);">1 day</div>
<div class=t style="left:859.98px;top:518.48px;font-size:17.5px;color:#222;transform:scaleX(1.0201);">Default type</div>
<div class=t style="left:969.03px;top:521.48px;font-size:17.5px;color:#222;transform:scaleX(0.9697);">Payment for time worked</div>
<div class=t style="left:850.00px;top:565.98px;font-size:17.5px;color:#222;transform:scaleX(0.9325);">Allow modification of split type</div>
<div class=t style="left:1000.50px;top:644.48px;font-size:17.5px;color:#222;">Default at creation</div>
<div class=t style="left:1010.50px;top:688.48px;font-size:17.5px;color:#222;transform:scaleX(0.9438);">Allow modification</div>
<div class=t style="left:1201.00px;top:649.48px;font-size:17.5px;color:#333;transform:scaleX(0.9532);">Standard</div>
<div class=t style="left:1364.01px;top:647.48px;font-size:17.5px;color:#333;transform:scaleX(0.9855);">Divisible</div>
<div class=t style="left:1197.00px;top:692.98px;font-size:17.5px;color:#fff;transform:scaleX(0.8160);">Yes</div>
</body></html>
